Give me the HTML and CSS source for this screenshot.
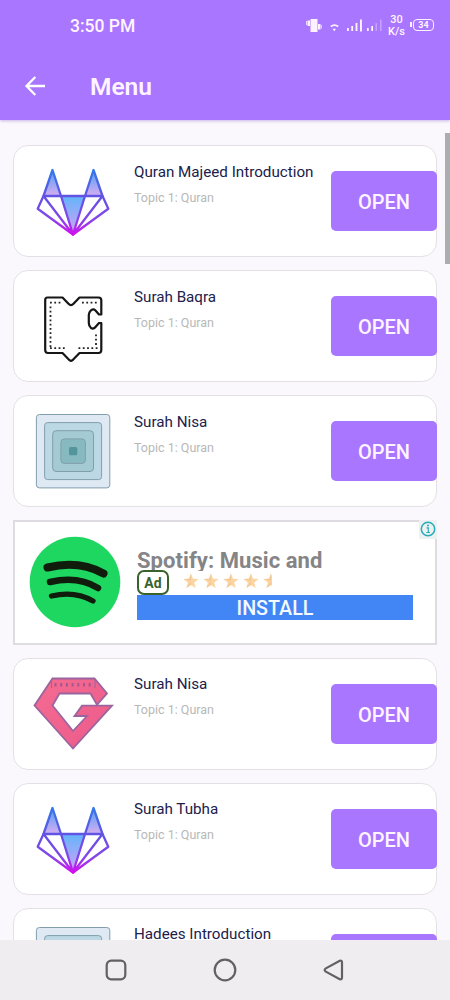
FILE: index.html
```
<!DOCTYPE html>
<html lang="en">
<head>
<meta charset="utf-8">
<title>Menu</title>
<link rel="stylesheet" href="styles.css">
</head>
<body>
<svg class="defs" aria-hidden="true">
  <defs>
    <linearGradient id="foxline" gradientUnits="userSpaceOnUse" x1="0" y1="168" x2="0" y2="236">
      <stop offset="0" stop-color="#2f7bea"/><stop offset=".45" stop-color="#6650e4"/><stop offset=".75" stop-color="#8347e8"/><stop offset="1" stop-color="#dc08f0"/>
    </linearGradient>
    <linearGradient id="foxear" gradientUnits="userSpaceOnUse" x1="0" y1="170" x2="0" y2="196">
      <stop offset="0" stop-color="#4f9ff5"/><stop offset="1" stop-color="#d6aef2"/>
    </linearGradient>
    <linearGradient id="foxface" gradientUnits="userSpaceOnUse" x1="0" y1="196" x2="0" y2="234">
      <stop offset="0" stop-color="#62b5fb"/><stop offset="1" stop-color="#d2a0f4"/>
    </linearGradient>
    <symbol id="fox" viewBox="28 160 90 84">
      <path fill="url(#foxear)" d="M52.500 170 61 196H43.500ZM93.500 170 102.500 196H85Z"/>
      <path fill="url(#foxface)" d="M61 196H85L73 233Z"/>
      <g fill="none" stroke="url(#foxline)" stroke-width="2.300" stroke-linejoin="round">
        <path d="M52.500 170 61 196H85L93.500 170 102.500 196 108.300 208.800 73 234.500 37.700 208.800 43.500 196Z"/>
        <path d="M43.500 196H61L73 234.500 85 196H102.500L73 234.500Z"/>
      </g>
    </symbol>
    <symbol id="puzzle" viewBox="28 285 90 84">
      <path fill="none" stroke="#161616" stroke-width="2.200" stroke-linejoin="round" stroke-linecap="round" d="M47.500 297.500H62.500L68.500 303.800Q71 306.500 73.500 303.800L79.500 297.500H98.500Q101.300 297.500 101.300 300.300V314.500H99L95.500 310.500Q93.500 308.500 91 310.300Q88.800 312.500 88.800 315V323Q88.800 326 91 328Q93.500 329.500 95.500 327L99 323H101.300V350Q101.300 353 98.500 353H79.500L72.500 360.200Q71 361.500 69.500 360.200L62.500 353H48Q45.200 353 45.200 350V300Q45.200 297.500 47.500 297.500Z"/>
      <path fill="none" stroke="#222" stroke-width="1.800" stroke-dasharray="1.800 2.500" d="M50 302.700H61M82 302.700H97.500M50.500 306.500V347M50 348.200H65M78.500 348.200H97.500M96 334.500V347"/>
    </symbol>
    <symbol id="squares" viewBox="28 410 90 84">
      <g stroke="#829eac" stroke-width="1">
        <rect x="36.400" y="414.500" width="73.400" height="73.400" rx="3" fill="#dfe9f3"/>
        <rect x="44.600" y="422.600" width="57" height="57" rx="3" fill="#bcd8e4"/>
        <rect x="52.700" y="430.700" width="40.800" height="40.800" rx="3.500" fill="#a4cad3"/>
        <rect x="60.900" y="438.900" width="24.500" height="24.500" rx="3.500" fill="#87b9c1"/>
      </g>
      <rect x="69" y="447" width="8.300" height="8.300" rx="1.500" fill="#54959d"/>
    </symbol>
    <linearGradient id="gem" x1="0" y1="0" x2="1" y2="1">
      <stop offset="0" stop-color="#f46c91"/><stop offset="1" stop-color="#ec5a8b"/>
    </linearGradient>
    <symbol id="ruby" viewBox="28 673 90 84">
      <path fill="url(#gem)" stroke="#9a659f" stroke-width="1.800" d="M52.500 678.500H94.500L107 693.500 97 704.700 90.500 693.500H59.500L52.500 705.500 73 731 87 716H74.500L82 705.700H112L73 748.500 34.500 705.500Z"/>
      <path fill="none" stroke="#9a659f" d="M51.500 679V688M95 679V688" stroke-width="1"/>
      <path fill="none" stroke="#a4588c" stroke-width="3.500" stroke-dasharray="2 3.700" d="M54.500 684.800H93"/>
    </symbol>
    <symbol id="star" viewBox="0 0 16 16">
      <path fill="#fbd5a1" d="M8 .5 10 5.700 15.600 6 11.200 9.500 12.700 15 8 12 3.300 15 4.800 9.500.4 6 6 5.700Z"/>
      <path fill="#eebe88" d="M8 .5V8L.4 6 6 5.700ZM8 8V12L3.300 15Z" opacity=".55"/>
    </symbol>
  </defs>
</svg>
<div class="screen">
  <header class="appbar">
    <div class="status">
      <span class="clock">3:50 PM</span>
      <svg class="signals" viewBox="304 14 80 22" width="80" height="22">
        <g fill="#fff2ff">
          <path d="M310.500 19H317.500V32H310.500ZM307.500 20.500H310V26H307.500ZM318 24H320.500V29.500H318Z"/>
          <path d="M306.500 21V25M321.300 25V28.500" stroke="#fff2ff" stroke-width=".8"/>
          <path d="M330.800 26.500Q334.500 23.700 338.200 26.500" fill="none" stroke="#fff2ff" stroke-width="1.600"/>
          <path d="M332.500 28.700H336L334.300 31.300Z"/>
          <path d="M347 28H348.800V31H347ZM351.300 26H353.100V31H351.300ZM355.600 23H357.400V31H355.600ZM360 19.500H361.900V31.500H360ZM367 28H368.700V31H367ZM371.300 26H373V31H371.300Z"/>
          <path opacity=".35" d="M375.500 23H377V31H375.500ZM380 19.500H381.600V31H380Z"/>
        </g>
      </svg>
      <span class="speed">30<br>K/s</span>
      <span class="battery">34</span>
    </div>
    <div class="titlebar">
      <svg class="back" viewBox="24 74 22 22" width="22" height="22"><path d="M45 85H27M35.300 76 26.500 85 35.300 94" fill="none" stroke="#fff" stroke-width="2.300"/></svg>
      <h1>Menu</h1>
    </div>
  </header>
  <main class="list">
    <article class="card"><svg class="icon"><use href="#fox"/></svg><div class="text"><h2>Quran Majeed Introduction</h2><p>Topic 1: Quran</p></div><button class="open">OPEN</button></article>
    <article class="card"><svg class="icon"><use href="#puzzle"/></svg><div class="text"><h2>Surah Baqra</h2><p>Topic 1: Quran</p></div><button class="open">OPEN</button></article>
    <article class="card"><svg class="icon"><use href="#squares"/></svg><div class="text"><h2>Surah Nisa</h2><p>Topic 1: Quran</p></div><button class="open">OPEN</button></article>
    <article class="ad">
      <svg class="spotify" viewBox="0 0 92 92"><circle cx="46" cy="46" r="45.300" fill="#1ed760"/><g fill="none" stroke="#101c0c" stroke-linecap="round"><path d="M18.500 31.500Q50 24 74.500 37.500" stroke-width="8"/><path d="M21 46Q49 39.500 69 52" stroke-width="6.500"/><path d="M22.500 60Q46 54.500 64 65" stroke-width="5.300"/></g></svg>
      <div class="adbody">
        <h2 class="adtitle">Spotify: Music and</h2>
        <div class="rating"><span class="tag">Ad</span><span class="stars"><svg><use href="#star"/></svg><svg><use href="#star"/></svg><svg><use href="#star"/></svg><svg><use href="#star"/></svg><span class="half"><svg><use href="#star"/></svg></span></span></div>
        <button class="install">INSTALL</button>
      </div>
      <span class="info"><svg viewBox="0 0 18 18" width="18" height="18"><circle cx="9" cy="9" r="6.700" fill="none" stroke="#27adba" stroke-width="1.500"/><path d="M7.500 7.800H9.300V12.500M7.300 12.500H11" fill="none" stroke="#27adba" stroke-width="1.200"/><circle cx="9" cy="5.500" r="1" fill="#27adba"/></svg></span>
    </article>
    <article class="card"><svg class="icon"><use href="#ruby"/></svg><div class="text"><h2>Surah Nisa</h2><p>Topic 1: Quran</p></div><button class="open">OPEN</button></article>
    <article class="card"><svg class="icon"><use href="#fox"/></svg><div class="text"><h2>Surah Tubha</h2><p>Topic 1: Quran</p></div><button class="open">OPEN</button></article>
    <article class="card"><svg class="icon"><use href="#squares"/></svg><div class="text"><h2>Hadees Introduction</h2></div><button class="open" aria-label="Open"></button></article>
    <span class="scrollbar"></span>
  </main>
  <nav class="navbar">
    <svg viewBox="0 0 24 24"><rect x="2.700" y="2.700" width="18.600" height="18.600" rx="4.500"/></svg>
    <svg viewBox="0 0 24 24"><circle cx="12" cy="12" r="10.300"/></svg>
    <svg viewBox="0 0 24 24"><path d="M17.800 2.800 3.800 10.400Q1.500 12 3.800 13.600L17.800 21.200Q20 21.800 20 19.500V4.500Q20 2.200 17.800 2.800Z"/></svg>
  </nav>
</div>
</body>
</html>
```
FILE: styles.css
```
* { box-sizing: border-box; }
body { margin: 0; font-family: Roboto, sans-serif; }
h1, h2, p { margin: 0; }
button { border: 0; padding: 0; font-family: inherit; }
.defs { position: absolute; width: 0; height: 0; }
.screen { width: 450px; height: 1000px; display: flex; flex-direction: column; overflow: hidden; background: #faf8fc; }
.appbar { flex: none; height: 120px; background: #a976ff; color: #fff4ff; box-shadow: 0 1px 3px #c9b4e8; z-index: 1; }
.status { height: 52px; display: flex; align-items: center; padding-left: 70px; }
.clock { width: 234px; font-size: 17.500px; font-weight: 500; line-height: 20px; }
.signals { margin-top: -2px; flex: none; }
.speed { margin-left: 2px; width: 21px; font-size: 11px; line-height: 12px; font-weight: 500; text-align: center; }
.battery { position: relative; margin: -3px 0 0 6px; width: 21px; height: 12px; border: 1.500px solid #fff2ff; border-radius: 4px; font-size: 9px; line-height: 10px; font-weight: 700; text-align: center; }
.battery::before { content: ""; position: absolute; left: -4px; top: 2px; width: 1.500px; height: 5px; background: #fff2ff; }
.titlebar { height: 68px; display: flex; align-items: center; padding-left: 24px; }
h1 { margin-left: 44px; font-size: 24.500px; font-weight: 600; }
.list { position: relative; flex: 1; min-height: 0; overflow: hidden; display: flex; flex-direction: column; gap: 13px; padding: 25.400px 13px 0; }
.card { flex: none; display: flex; height: 112px; border: 1px solid #e4e1e6; border-radius: 15px; background: #fff; }
.icon { flex: none; width: 90px; height: 84px; margin: 14px 0 0 14px; }
.text { flex: none; width: 197px; padding: 15.300px 0 0 16px; }
.text h2 { font-size: 15.200px; line-height: 20px; font-weight: 400; color: #20204b; white-space: nowrap; }
.text p { margin-top: 8px; font-size: 12.500px; line-height: 16px; color: #b8b8b8; }
.open { flex: none; width: 106px; height: 60px; margin: 25px 0 0 16px; border-radius: 5px; background: #a976ff; color: #fff4ff; font-size: 20px; line-height: 62px; font-weight: 500; }
.ad { position: relative; flex: none; display: flex; height: 124.500px; border: 2px solid #dedce0; background: #fff; }
.spotify { flex: none; width: 92px; height: 92px; margin: 14px 0 0 14px; }
.adbody { width: 276px; margin: 26px 0 0 16px; }
.adtitle { height: 23px; overflow: hidden; font-size: 22px; line-height: 26px; font-weight: 700; letter-spacing: .06px; color: #858487; white-space: nowrap; }
.rating { display: flex; height: 24px; align-items: center; }
.tag { width: 32px; height: 25px; margin-top: -2px; border: 2px solid #39632a; border-radius: 7px; color: #39632a; font-size: 14px; line-height: 22px; font-weight: 700; text-align: center; }
.stars { display: flex; gap: 4px; margin: -5px 0 0 14px; }
.stars svg { display: block; width: 16px; height: 16px; flex: none; }
.half { width: 9px; overflow: hidden; }
.install { display: block; width: 276px; height: 25px; background: #4286f5; color: #f4faff; font-size: 19.700px; line-height: 28px; font-weight: 500; }
.info { position: absolute; right: -2px; top: -2px; width: 18px; height: 19px; background: #edf1f2; }
.info svg { display: block; }
.scrollbar { position: absolute; right: 0; top: 13px; width: 5px; height: 131px; background: #adacae; }
.navbar { flex: none; height: 60px; display: flex; justify-content: center; align-items: center; gap: 85px; background: #efedf0; }
.navbar svg { width: 24px; height: 24px; fill: none; stroke: #636064; stroke-width: 2.200; stroke-linejoin: round; }
```
